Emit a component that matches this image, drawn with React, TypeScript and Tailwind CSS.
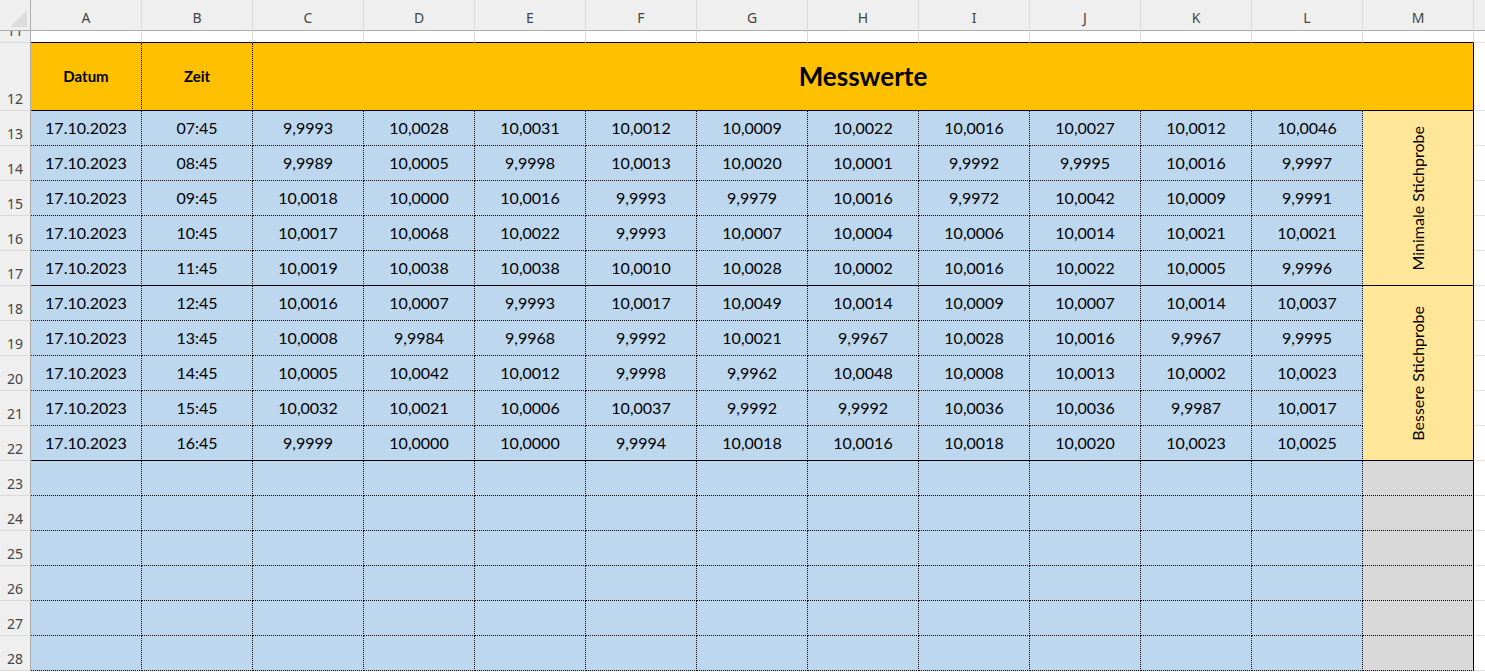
import React from "react";

const letters = ["A", "B", "C", "D", "E", "F", "G", "H", "I", "J", "K", "L", "M"];

const data: [string, string[]][] = [
  ["07:45", ["9,9993", "10,0028", "10,0031", "10,0012", "10,0009", "10,0022", "10,0016", "10,0027", "10,0012", "10,0046"]],
  ["08:45", ["9,9989", "10,0005", "9,9998", "10,0013", "10,0020", "10,0001", "9,9992", "9,9995", "10,0016", "9,9997"]],
  ["09:45", ["10,0018", "10,0000", "10,0016", "9,9993", "9,9979", "10,0016", "9,9972", "10,0042", "10,0009", "9,9991"]],
  ["10:45", ["10,0017", "10,0068", "10,0022", "9,9993", "10,0007", "10,0004", "10,0006", "10,0014", "10,0021", "10,0021"]],
  ["11:45", ["10,0019", "10,0038", "10,0038", "10,0010", "10,0028", "10,0002", "10,0016", "10,0022", "10,0005", "9,9996"]],
  ["12:45", ["10,0016", "10,0007", "9,9993", "10,0017", "10,0049", "10,0014", "10,0009", "10,0007", "10,0014", "10,0037"]],
  ["13:45", ["10,0008", "9,9984", "9,9968", "9,9992", "10,0021", "9,9967", "10,0028", "10,0016", "9,9967", "9,9995"]],
  ["14:45", ["10,0005", "10,0042", "10,0012", "9,9998", "9,9962", "10,0048", "10,0008", "10,0013", "10,0002", "10,0023"]],
  ["15:45", ["10,0032", "10,0021", "10,0006", "10,0037", "9,9992", "9,9992", "10,0036", "10,0036", "9,9987", "10,0017"]],
  ["16:45", ["9,9999", "10,0000", "10,0000", "9,9994", "10,0018", "10,0016", "10,0018", "10,0020", "10,0023", "10,0025"]],
];

const rowHead =
  "flex items-end justify-center overflow-hidden pb-[4px] bg-[#efefef] border-r border-b border-r-[#ababab] border-b-[#d9d9d9] text-[14px] leading-[14px] text-[#444] font-['Noto_Sans',sans-serif]";
const blue =
  "flex items-center justify-center bg-[#bdd7ee] border-r border-b border-dotted border-black text-[16px] text-black";
const filler = "col-start-15 bg-white border-b border-[#e1e1e1]";

function RowHead({ n }: { n: number }) {
  return <div className={rowHead}>{n}</div>;
}

export default function App() {
  return (
    <div className="h-[672px] w-[1485px] overflow-hidden bg-white font-['Lato',sans-serif]">
      <div className="grid grid-cols-[31px_repeat(13,111px)_1fr] grid-rows-[31px_12px_68px_repeat(16,35px)]">
        {/* column headers */}
        <div className="flex items-end justify-end bg-[#efefef] border-r border-b border-[#ababab] pr-[3px] pb-[3px]">
          <svg width="17" height="17" viewBox="0 0 17 17">
            <polygon points="0,17 17,17 17,0" fill="#dcdcdc" />
          </svg>
        </div>
        {letters.map((l) => (
          <div
            key={l}
            className="flex items-end justify-center pb-[5px] bg-[#efefef] border-r border-b border-r-[#dadada] border-b-[#ababab] text-[14px] leading-[14px] text-[#444] font-['Noto_Sans',sans-serif]"
          >
            {l}
          </div>
        ))}
        <div className="bg-[#efefef] border-b border-[#ababab]" />

        {/* row 11 */}
        <RowHead n={11} />
        {letters.map((l) => (
          <div key={l} className="bg-white border-r border-b border-r-[#dadada] border-b-black" />
        ))}
        <div className={filler} />

        {/* row 12 */}
        <RowHead n={12} />
        <div className="flex items-center justify-center bg-[#ffc000] border-r border-b border-dotted border-black [border-bottom-style:solid] text-[15px] font-bold">
          Datum
        </div>
        <div className="flex items-center justify-center bg-[#ffc000] border-r border-b border-dotted border-black [border-bottom-style:solid] text-[15px] font-bold">
          Zeit
        </div>
        <div className="col-span-11 flex items-center justify-center bg-[#ffc000] border-r border-b border-black text-[26px] font-bold">
          Messwerte
        </div>
        <div className={filler} />

        {/* rows 13-22 */}
        {data.map(([time, values], i) => {
          const n = 13 + i;
          const solid = n === 17 || n === 22 ? "[border-bottom-style:solid]" : "";
          return (
            <React.Fragment key={n}>
              <RowHead n={n} />
              <div className={`${blue} ${solid}`}>17.10.2023</div>
              <div className={`${blue} ${solid}`}>{time}</div>
              {values.map((v, j) => (
                <div key={j} className={`${blue} ${solid}`}>
                  {v}
                </div>
              ))}
              {n === 13 && (
                <div className="row-span-5 flex items-center justify-center bg-[#ffe699] border-r border-b border-black">
                  <span className="rotate-180 text-[16px] [writing-mode:vertical-rl]">Minimale Stichprobe</span>
                </div>
              )}
              {n === 18 && (
                <div className="row-span-5 flex items-center justify-center bg-[#ffe699] border-r border-b border-black">
                  <span className="rotate-180 text-[16px] [writing-mode:vertical-rl]">Bessere Stichprobe</span>
                </div>
              )}
              <div className={filler} />
            </React.Fragment>
          );
        })}

        {/* rows 23-28 */}
        {[23, 24, 25, 26, 27, 28].map((n) => (
          <React.Fragment key={n}>
            <RowHead n={n} />
            {letters.slice(0, 12).map((l) => (
              <div key={l} className={blue} />
            ))}
            <div className="bg-[#d9d9d9] border-b border-dotted border-black border-r border-r-black [border-right-style:solid]" />
            <div className={filler} />
          </React.Fragment>
        ))}
      </div>
    </div>
  );
}
